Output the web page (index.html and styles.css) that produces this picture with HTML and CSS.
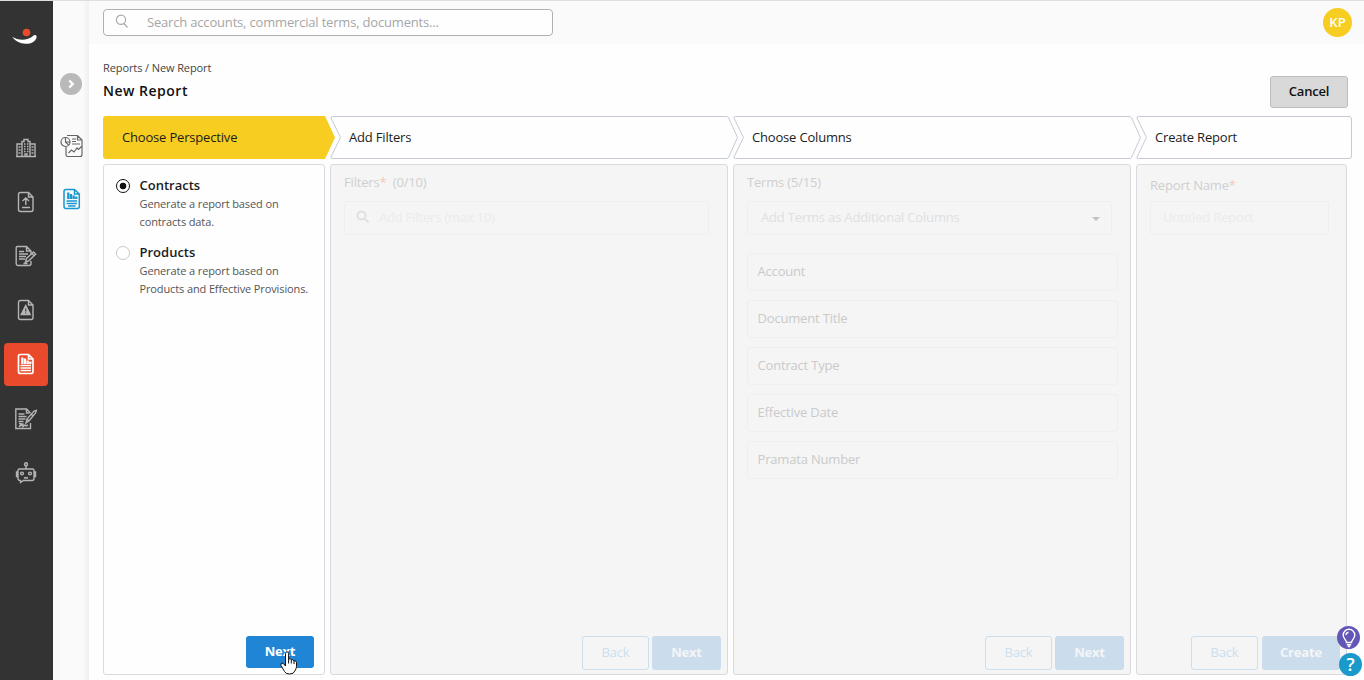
FILE: index.html
```html
<!DOCTYPE html>
<html lang="en">
<head>
<meta charset="utf-8">
<title>New Report</title>
<link rel="stylesheet" href="styles.css">
</head>
<body>
<div class="app">
  <nav class="sidebar">
    <svg class="logo" viewBox="0 0 26 17" width="26" height="17"><path d="M.3 8.700C6 12.500 15 13 21 7.900c1.600-1.500 4-.8 3.600 1.300C23.600 14 18 16 13.500 15.700 8 15.500 3 13 .3 8.700Z" fill="#fff"/><circle cx="14.500" cy="4.500" r="3.800" fill="#ee4a29"/></svg>
    <ul class="nav-list">
      <li><svg viewBox="0 0 22 22" width="22" height="22"><path d="M7 19.500V4.500h2v-2h4v2h2v15ZM7 7H2v12.500h5M15 7h5v12.500h-5M1 19.500h20M9 7h1.500m1.500 0h1.500M9 9.500h1.500m1.500 0h1.500M9 12h1.500m1.500 0h1.500M9 14.500h1.500m1.500 0h1.500M3.500 10h2m-2 3h2m-2 3h2m11-6h2m-2 3h2m-2 3h2M10 19v-2h2v2"/></svg></li>
      <li><svg viewBox="0 0 22 22" width="22" height="22"><path d="M5.500 1.500h8l4.500 4.500v12.500q0 2-2 2H5.500q-2 0-2-2V3.500q0-2 2-2ZM13.500 1.500V6H18M10.800 14V7M7.500 10l3.300-3 3.200 3M7 16.500h8"/></svg></li>
      <li><svg viewBox="0 0 22 22" width="22" height="22"><path d="M16 10V6l-4.500-4.500h-9q-1.300 0-1.300 1.300v16q0 1.700 1.800 1.700h11q2 0 2-2v-2.500M11.500 1.500V6H16M4 6.500h5M4 9h9M4 11.500h7M4 14h6M8.500 18.500h4M10.500 17l1-3.500 7-6.500 2.200 2.300-7 6.500ZM17 8.500l2 2.200"/></svg></li>
      <li><svg viewBox="0 0 22 22" width="22" height="22"><path d="M5.500 1.500h8l4.500 4.500v12.500q0 2-2 2H5.500q-2 0-2-2V3.500q0-2 2-2ZM13.500 1.500V6H18"/><path class="solid" d="m10.700 6.500 4.500 9h-9Z"/><path class="cut" d="M10.700 9.500v3m0 1v1"/></svg></li>
      <li class="active"><svg viewBox="0 0 22 22" width="22" height="22"><path d="M5 1.500h8.500l4.500 4.500v12.500q0 2-2 2H5.500q-2 0-2-2V3q0-1.500 1.500-1.500ZM13.500 1.500V6H18M5.500 12.500h10.500M5.500 15h10.500M5.500 17.500h10.500"/><path class="bars" d="M7.300 4.500v6.500M10 5.500V11M12.700 7.500V11M15.300 8.500v2.500"/></svg></li>
      <li><svg viewBox="0 0 22 22" width="22" height="22"><path d="M15 5.500v-1l-3.500-3.500H.8v19.500H15.500V15M11.500 1v4H14M3.500 6h6M3.500 8.500h8M3.500 11h7M3.500 13.500h5M4 15.500l3 .5-3 2.500 4-2v2l2-1.500 1 1 2-1M11 15l1-4 7-8 2.500-.7-1 2.700-6.500 8ZM16 6l2.500 2M12 11l2 2"/></svg></li>
      <li><svg viewBox="0 0 22 22" width="22" height="22"><circle cx="11" cy="2.300" r="1.500"/><path d="M11 4v3M4.500 7h13q1.500 0 1.500 1.500v8q0 2-2 2H8.500l-3 2v-2q-2.500 0-2.500-2v-8Q3 7 4.500 7ZM3 10H1.500v4.500H3M19 10h1.500v4.500H19M9 15.500q2 1 4 0"/><circle cx="7" cy="11.500" r="1.400"/><circle cx="15" cy="11.500" r="1.400"/></svg></li>
    </ul>
  </nav>

  <aside class="subnav">
    <button class="expand" aria-label="Expand"><svg viewBox="0 0 22 22" width="22" height="22"><path d="m9.300 7.500 3.500 3.500-3.500 3.500" fill="none" stroke="#fff" stroke-width="2.300"/></svg></button>
    <svg class="sub-icon dashboards" viewBox="0 0 24 24" width="24" height="24"><path d="M7 1.500h10.500l4.500 4.500v14.500q0 2-2 2H7.500q-1.500 0-1.500-2V13M17.500 1.500V6H22M12 5h4M12 7.500h4M12 10h8M8.500 19l3-3 2.500 2 3-4 1.500 1.500 3-3"/><circle cx="5.500" cy="8" r="4.500"/><path d="M5.500 3.500V8H10M5.500 8l3.200 3.200"/></svg>
    <svg class="sub-icon reports" viewBox="0 0 22 22" width="22" height="22"><path d="M5 1.500h8.500L18.300 6v12.500q0 2-2 2H5q-2 0-2-2v-15q0-2 2-2ZM13.500 1.500V6h4.500M5.500 13h10.500M5.500 15.500h10.500M7 18h7.500"/><path class="bars" d="M7.300 4.500v6.500M10 6V11M12.700 7.500V11M15.300 8.500v2.500"/></svg>
  </aside>

  <div class="page">
    <header class="topbar">
      <div class="search"><svg viewBox="0 0 15 15" width="15" height="15"><circle cx="6" cy="5.800" r="4.600"/><path d="m9 9.500 3.500 4"/></svg><span>Search accounts, commercial terms, documents...</span></div>
      <div class="avatar">KP</div>
    </header>

    <main class="content">
      <div class="heading">
        <div>
          <div class="crumbs">Reports / New Report</div>
          <h1>New Report</h1>
        </div>
        <button class="btn cancel">Cancel</button>
      </div>

      <div class="steps">
        <div class="step current"><svg viewBox="0 0 232 43" width="232" height="43"><path d="M3 0H222l10 21.500L222 43H3q-3 0-3-3V3q0-3 3-3Z"/></svg><span>Choose Perspective</span></div>
        <div class="step"><svg viewBox="0 0 408 43" width="408" height="43"><path d="M2.500.5H396q2 0 2.500 1.200l9 19.800-9 19.800q-.5 1.200-2.500 1.200H2.500Q.5 42.500 1 41l9.500-19.500L1 2Q.5.500 2.500.5Z"/></svg><span>Add Filters</span></div>
        <div class="step"><svg viewBox="0 0 408 43" width="408" height="43"><path d="M2.500.5H396q2 0 2.500 1.200l9 19.800-9 19.800q-.5 1.200-2.500 1.200H2.500Q.5 42.500 1 41l9.500-19.500L1 2Q.5.500 2.500.5Z"/></svg><span>Choose Columns</span></div>
        <div class="step"><svg viewBox="0 0 216 43" width="216" height="43"><path d="M2.500.5H213q2.500 0 2.500 2.500V40q0 2.500-2.500 2.500H2.500Q.5 42.500 1 41l9.500-19.500L1 2Q.5.500 2.500.5Z"/></svg><span>Create Report</span></div>
      </div>

      <div class="panels">
        <section class="panel perspective">
          <div class="option"><i class="radio checked"></i><div><b>Contracts</b><p>Generate a report based on contracts data.</p></div></div>
          <div class="option"><i class="radio"></i><div><b>Products</b><p>Generate a report based on Products and Effective Provisions.</p></div></div>
          <div class="actions"><button class="btn primary">Next</button></div>
        </section>

        <section class="panel disabled filters">
          <div class="label">Filters<em>*</em>&nbsp; (0/10)</div>
          <div class="field"><svg viewBox="0 0 14 14" width="14" height="14"><circle cx="5.500" cy="5.500" r="4"/><path d="m8.500 8.500 4 4"/></svg><span>Add Filters (max 10)</span></div>
          <div class="actions"><button class="btn back">Back</button><button class="btn next">Next</button></div>
        </section>

        <section class="panel disabled columns">
          <div class="label">Terms (5/15)</div>
          <div class="field select"><span>Add Terms as Additional Columns</span><i class="caret"></i></div>
          <ul class="terms">
            <li>Account</li>
            <li>Document Title</li>
            <li>Contract Type</li>
            <li>Effective Date</li>
            <li>Pramata Number</li>
          </ul>
          <div class="actions"><button class="btn back">Back</button><button class="btn next">Next</button></div>
        </section>

        <section class="panel disabled create">
          <div class="label">Report Name<em>*</em></div>
          <div class="field name"><span>Untitled Report</span></div>
          <div class="actions"><button class="btn back">Back</button><button class="btn next">Create</button></div>
        </section>
      </div>
    </main>
  </div>

  <div class="float tips"><svg viewBox="0 0 22 22" width="22" height="22"><path d="M8.500 15.500c0-3-3.300-3.500-3.300-7.500a5.800 5.800 0 0 1 11.600 0c0 4-3.300 4.500-3.300 7.500ZM8.800 17.700h4.400M9.800 19.500h2.400M8 8a3 3 0 0 1 2.500-2.700" fill="none" stroke="#fff" stroke-width="1.400"/></svg></div>
  <div class="float help">?</div>
  <svg class="cursor" viewBox="0 0 18 24" width="18" height="24"><path d="M5.500 14V2.500q0-1.700 1.500-1.700t1.600 1.700V8q2-.8 2.600.8 2-.7 2.500 1 2.600-.6 2.800 1.700v4q0 2-1.700 4.500-.8 3-5.300 3-4 0-5-2.500L1 14.500q-.6-2 1-2.500 1.500 0 3.500 3Z" fill="#fff" stroke="#111"/><path d="M8.600 8v4.500M11.300 9v3.500M14 10v3" fill="none" stroke="#111"/></svg>
</div>
</body>
</html>
```

FILE: styles.css
```css
* { box-sizing: border-box; }
body { margin: 0; font-family: "Open Sans", sans-serif; font-size: 13px; letter-spacing: -.18px; color: #1c1c1c; background: #fefefe; }
ul { list-style: none; margin: 0; padding: 0; }
h1, p { margin: 0; }
svg { display: block; flex: none; }
button { font: inherit; letter-spacing: inherit; padding: 0; border: 0; }

.app { position: relative; display: flex; width: 1364px; height: 680px; overflow: hidden; border-top: 1px solid #dfdfdf; }

.sidebar { flex: none; width: 53px; background: #333; }
.logo { margin: 27px 0 0 12px; }
.nav-list { padding: 81px 4px 0; display: grid; gap: 11px; }
.nav-list li { height: 43.200px; border-radius: 4px; display: flex; align-items: center; justify-content: center; }
.nav-list path, .nav-list circle { fill: none; stroke: #b5b5b5; stroke-width: 1.400; }
.nav-list .solid { fill: #b5b5b5; }
.nav-list .cut { stroke: #555; }
.nav-list .active { background: #e94a2b; margin-right: 1px; }
.nav-list .active path { stroke: #fff; stroke-width: 1.700; }
.nav-list .active .bars, .reports .bars { stroke-width: 2.300; }
.nav-list li:not(.active) { padding-right: 1px; }

.subnav { flex: none; width: 36px; padding-left: 6px; background: linear-gradient(90deg, #fafafa 30px, #f0f0f0); }
.expand { display: block; width: 22px; height: 22px; margin: 72px 0 0 1px; border-radius: 50%; background: #b9b9b9; }
.sub-icon { fill: none; stroke-width: 1.200; }
.dashboards { margin: 39px 0 0 1px; stroke: #666; }
.reports { margin: 30px 0 0 1.500px; stroke: #1997cf; stroke-width: 1.500; }

.page { flex: 1; min-width: 0; }
.topbar { height: 43px; padding: 0 12px 0 14px; background: #fafafa; display: flex; align-items: center; justify-content: space-between; }
.search { width: 450px; height: 27px; border: 1px solid #b0b0b0; border-radius: 4px; background: #fefefe; display: flex; align-items: center; gap: 17px; padding: 0 0 2px 11px; color: #a6a6a6; }
.search svg { fill: none; stroke: #aaa; stroke-width: 1.200; }
.avatar { width: 29px; height: 29px; border-radius: 50%; background: #f7cd21; color: #fff; font-weight: 600; line-height: 29px; letter-spacing: 0; text-align: center; }

.content { padding: 16px 12px 0 14px; }
.heading { display: flex; justify-content: space-between; height: 56px; }
.crumbs { font-size: 11px; line-height: 16px; letter-spacing: -.1px; color: #444; }
h1 { font-size: 14px; line-height: 20px; font-weight: 600; margin-top: 5px; letter-spacing: .5px; color: #111; }
.btn { height: 34px; padding-bottom: 2px; border-radius: 3px; font-size: 13px; font-weight: 600; }
.cancel { width: 78px; height: 32px; margin: 16px 4px 0 0; border: 1px solid #bdbdbd; background: #d9d9d9; color: #111; }

.steps { display: grid; grid-template-columns: 222px 398px 398px 216px; column-gap: 5px; }
.step { display: grid; height: 43px; align-items: center; }
.step svg, .step span { grid-area: 1 / 1; }
.step svg { fill: #fefefe; stroke: #c5cad6; overflow: visible; }
.step span { z-index: 1; padding: 0 0 2px 19px; }
.current svg { fill: #f7cd21; stroke: none; }

.panels { display: grid; grid-template-columns: 222px 398px 398px 211px; column-gap: 5px; margin-top: 5px; }
.panel { height: 511px; border: 1px solid #d9dadf; border-radius: 3px; display: flex; flex-direction: column; }
.perspective { padding: 11px 10px 6px 12px; }
.option { display: flex; gap: 9.500px; height: 67px; }
.option b { display: block; line-height: 18px; font-weight: 600; letter-spacing: 0; }
.option p { padding-top: 1px; font-size: 11px; line-height: 18px; letter-spacing: -.12px; color: #555; width: 180px; }
.radio { flex: none; width: 14px; height: 14px; margin-top: 3px; border: 1px solid #c9c9c9; border-radius: 50%; background: #fff; }
.checked { border-color: #111; background: radial-gradient(circle, #111 3px, transparent 3.700px); }
.actions { display: flex; justify-content: flex-end; gap: 3px; margin-top: auto; }
.primary { width: 68px; height: 32px; background: #2185d5; color: #fff; font-weight: 700; }

.disabled { background: #f5f5f5; color: #cacaca; padding: 8px 6px 4px 13px; }
.label { line-height: 18px; color: #cfcfcf; }
.label em { font-style: normal; color: #f6c7bb; }
.field { height: 34px; margin: 10px 12px 0 0; border: 1px solid #efefef; border-radius: 3px; display: flex; align-items: center; gap: 9px; padding: 0 11px 2px; color: #ebebeb; }
.field svg { fill: none; stroke: #e0e0e0; stroke-width: 2; }
.select { justify-content: space-between; padding-left: 13px; color: #e0e0e0; }
.caret { border: 4px solid transparent; border-top-color: #c2c2c2; border-bottom: 0; margin-top: 4px; }
.terms { margin-top: 18px; display: grid; gap: 9px; margin-right: 6px; }
.terms li { height: 38px; padding: 0 9.500px 3px; border: 1px solid #efefef; border-radius: 4px; display: flex; align-items: center; }
.back { width: 67px; border: 1px solid #cbdfee; background: #f5f5f5; color: #cbdfee; font-weight: 400; }
.next { width: 69px; background: #cbddec; color: #f4f5f6; font-weight: 700; }
.create { padding-top: 11px; }
.name { margin: 7px 11px 0 0; padding-left: 12px; }
.create .next { width: 78px; }
.create .actions { gap: 4px; }

.float { position: absolute; width: 23px; height: 23px; border-radius: 50%; color: #fff; }
.tips { left: 1337px; top: 625px; background: #6257b7; display: grid; place-items: center; }
.help { left: 1339px; top: 652px; background: #1a9acb; font-size: 18px; font-weight: 600; line-height: 23px; letter-spacing: 0; text-align: center; }
.cursor { position: absolute; left: 280px; top: 650px; }
```
